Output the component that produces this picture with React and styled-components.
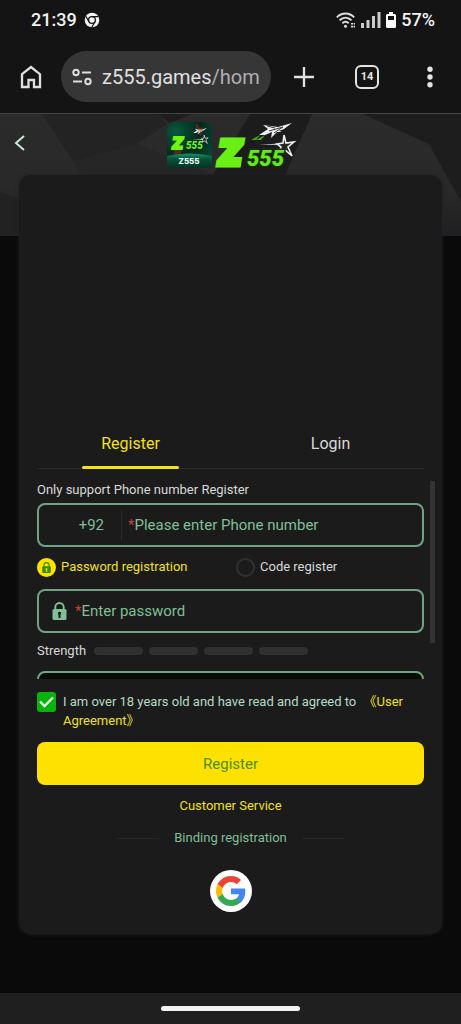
import React, { useState } from "react";
import styled, { createGlobalStyle } from "styled-components";

const GlobalStyle = createGlobalStyle`
  *, *::before, *::after { box-sizing: border-box; }
  body { margin: 0; background: #0a0a0b; }
  button, input { font: inherit; color: inherit; }
  svg { display: block; flex: none; overflow: visible; }
`;

const color = {
  chrome: "#141414",
  card: "#1b1b1b",
  mint: "#80bf98",
  yellow: "#f2e01c",
  button: "#ffe100",
  text: "#d9d9d9",
  faint: "#2b2b2b",
};

const Page = styled.div`
  min-height: 100vh;
  display: flex;
  flex-direction: column;
  background: #0a0a0b;
  color: ${color.text};
  font-family: Roboto, "Noto Sans CJK SC", sans-serif;
  font-size: 14px;
  line-height: 18px;
`;

const StatusBar = styled.header`
  height: 40px;
  padding: 0 26px 0 31px;
  display: flex;
  align-items: center;
  justify-content: space-between;
  background: ${color.chrome};
  color: #f2f2f2;
  font-size: 18px;
  font-weight: 500;
`;

const StatusGroup = styled.div`
  display: flex;
  align-items: center;
  gap: ${(p) => p.$gap}px;
`;

const BrowserBar = styled.nav`
  height: 74px;
  padding: 0 18px;
  display: flex;
  align-items: center;
  background: ${color.chrome};
  border-bottom: 1px solid #444;
`;

const IconButton = styled.button`
  display: grid;
  place-items: center;
  width: 26px;
  height: 26px;
  padding: 0;
  border: 0;
  background: none;
  cursor: pointer;
`;

const AddressPill = styled.div`
  flex: 1;
  min-width: 0;
  height: 51px;
  margin-left: 17px;
  padding: 0 8px 0 10px;
  display: flex;
  align-items: center;
  gap: 9px;
  border-radius: 26px;
  background: #363636;
`;

const AddressText = styled.span`
  flex: 1;
  min-width: 0;
  overflow: hidden;
  white-space: nowrap;
  font-size: 20px;
  line-height: 28px;
  color: #e0e0e0;
  span { color: #b0b0b0; }
`;

const BrowserActions = styled.div`
  display: flex;
  align-items: center;
  gap: 38px;
  margin-left: 20px;
`;

const TabCount = styled.button`
  width: 24px;
  height: 24px;
  padding: 0;
  border: 2px solid #e3e3e3;
  border-radius: 6px;
  background: none;
  color: #e3e3e3;
  font-size: 11px;
  line-height: 20px;
  font-weight: 700;
`;

const Main = styled.main`
  position: relative;
  flex: 1;
  padding: 0 19px 59px;
`;

const Backdrop = styled.svg`
  position: absolute;
  inset: 0 0 auto;
  width: 100%;
  height: 122px;
  overflow: hidden;
`;

const BrandRow = styled.div`
  position: relative;
  height: 61px;
  display: grid;
  grid-template-columns: 1fr auto 1fr;
  align-items: center;
`;

const Back = styled.button`
  justify-self: start;
  width: 24px;
  height: 28px;
  margin-left: -7px;
  padding: 0;
  border: 0;
  background: none;
`;

const Brand = styled.div`
  display: flex;
  align-items: center;
  gap: 4px;
`;

const Card = styled.section`
  position: relative;
  padding: 0 18px 22px;
  border-radius: 12px;
  background: ${color.card};
  box-shadow: 0 0 4px #20202a;
`;

const Banner = styled.div`
  height: 243px;
`;

const Tabs = styled.div`
  height: 51px;
  display: grid;
  grid-template-columns: 1fr 1fr;
  column-gap: 13px;
  border-bottom: 1px solid ${color.faint};
`;

const Tab = styled.button`
  display: flex;
  flex-direction: column;
  align-items: center;
  height: 51px;
  padding: 15px 0 0;
  border: 0;
  background: none;
  color: ${(p) => (p.$active ? color.yellow : color.text)};
  font-size: 16px;
  line-height: 22px;

  &::after {
    content: "";
    width: 97px;
    height: 3px;
    margin-top: auto;
    border-radius: 2px;
    background: ${(p) => (p.$active ? color.yellow : "transparent")};
  }
`;

const ScrollFrame = styled.div`
  position: relative;
  margin-top: 12px;
`;

const ScrollArea = styled.div`
  height: 198px;
  overflow-y: auto;
  scrollbar-width: none;
`;

const ScrollThumb = styled.div`
  position: absolute;
  top: 0;
  right: -11px;
  width: 5px;
  height: 162px;
  background: #333;
`;

const Hint = styled.p`
  margin: 0 0 4px;
  font-size: 13px;
`;

const Field = styled.label`
  display: flex;
  align-items: center;
  height: 44px;
  border: 2px solid #70a383;
  border-radius: 8px;
  background: ${(p) => (p.$dark ? "#060b08" : "transparent")};
  color: ${color.mint};
  font-size: 15px;
`;

const Prefix = styled.span`
  width: 83px;
  height: 30px;
  padding-right: 17px;
  margin-right: 6px;
  border-right: 1px solid ${color.faint};
  line-height: 30px;
  text-align: right;
`;

const FieldIcon = styled.span`
  margin: 0 8px 0 13px;
`;

const Star = styled.span`
  color: #c8403c;
`;

const TextInput = styled.input`
  flex: 1;
  min-width: 0;
  padding: 0;
  border: 0;
  outline: 0;
  background: none;
  &::placeholder { color: ${color.mint}; opacity: 1; }
`;

const Methods = styled.div`
  display: grid;
  grid-template-columns: 199px 1fr;
  margin: 10px 0 12px;
`;

const Method = styled.label`
  display: flex;
  align-items: center;
  gap: 5px;
  height: 20px;
  font-size: 13px;
  color: ${(p) => (p.$active ? color.yellow : color.text)};
`;

const RadioMark = styled.span`
  position: relative;
  display: grid;
  place-items: center;
  width: 19px;
  height: 19px;
  border-radius: 50%;
  border: 2px solid ${(p) => (p.$active ? color.button : "#303030")};
  background: ${(p) => (p.$active ? color.button : "transparent")};
`;

const HiddenInput = styled.input`
  position: absolute;
  inset: 0;
  width: 100%;
  height: 100%;
  margin: 0;
  opacity: 0;
`;

const Strength = styled.div`
  display: flex;
  align-items: center;
  gap: 6px;
  height: 18px;
  margin: 9px 0 11px;
  font-size: 13px;
`;

const StrengthBars = styled.span`
  display: flex;
  gap: 6px;
  padding-left: 2px;
`;

const StrengthBar = styled.span`
  width: 49px;
  height: 8px;
  border-radius: 4px;
  background: #303030;
`;

const Agreement = styled.div`
  display: flex;
  gap: 7px;
  margin-top: 13px;
  font-size: 13px;
  line-height: 19px;
  color: #b5dcc5;
`;

const CheckMark = styled.span`
  position: relative;
  flex: none;
  display: grid;
  place-items: center;
  width: 19px;
  height: 20px;
  border-radius: 3px;
  background: ${(p) => (p.$on ? "#08b30c" : "#333")};
`;

const TextLink = styled.a`
  color: ${color.yellow};
  text-decoration: none;
`;

const AgreementText = styled.div`
  ${TextLink} { margin-left: 4px; }
`;

const Submit = styled.button`
  display: block;
  width: 100%;
  height: 43px;
  margin-top: 12px;
  border: 0;
  border-radius: 8px;
  background: ${color.button};
  color: #4c8c10;
  font-size: 15px;
`;

const Footer = styled.div`
  display: flex;
  flex-direction: column;
  align-items: center;
  margin-top: 12px;
  font-size: 13px;
`;

const Divider = styled.div`
  display: flex;
  align-items: center;
  gap: 15px;
  margin: 14px 0 23px;
  color: ${color.mint};

  &::before, &::after {
    content: "";
    width: 43px;
    height: 1px;
    background: #262626;
  }
`;

const GoogleButton = styled.button`
  display: grid;
  place-items: center;
  width: 42px;
  height: 42px;
  padding: 0;
  border: 0;
  border-radius: 50%;
  background: #fff;
`;

const GestureBar = styled.footer`
  height: 31px;
  display: grid;
  place-items: center;
  background: #1f1f1f;

  &::after {
    content: "";
    width: 139px;
    height: 5px;
    border-radius: 3px;
    background: #f2f2f2;
  }
`;

const ChromeIcon = () => (
  <svg width="16" height="16" viewBox="0 0 16 16">
    <circle cx="8" cy="8" r="7.3" fill="#f2f2f2" />
    <circle cx="8" cy="8" r="3.4" fill="#f2f2f2" stroke="#141414" strokeWidth="1.3" />
    <path d="M8 4.6h6.5M5 9.8L1.8 4.3M11 9.8L7.8 15.2" stroke="#141414" strokeWidth="1.2" />
  </svg>
);

const WifiIcon = () => (
  <svg width="20" height="17" viewBox="0 0 20 17" fill="none" stroke="#ddd" strokeWidth="1.9">
    <path d="M.8 5.3C5.8.2 13.2.2 18.2 5.3M3.5 8.3c3.6-3.5 8.4-3.5 12 0M6.3 11.2c2-1.9 4.4-1.9 6.4 0" />
    <circle cx="9.5" cy="14.3" r="1.5" fill="#ddd" stroke="none" />
    <path d="M15 11.8h4M15 14.6h4" strokeWidth="1.6" strokeDasharray="2.3 .6" />
  </svg>
);

const SignalIcon = () => (
  <svg width="20" height="16" viewBox="0 0 20 16" fill="#ccc">
    <path d="M0 11h3v5H0zM5.5 8h3v8h-3zM11 4h3v12h-3zM16.5 0h3v16h-3z" />
  </svg>
);

const BatteryIcon = () => (
  <svg width="10" height="16" viewBox="0 0 10 16">
    <path d="M3 0h4v2h1.5Q10 2 10 3.5v11Q10 16 8.5 16h-7Q0 16 0 14.5v-11Q0 2 1.5 2H3z" fill="#fff" />
    <path d="M2 4h6v4H2z" fill="#141414" />
  </svg>
);

const HomeIcon = () => (
  <svg width="24" height="26" viewBox="0 0 24 26" fill="none" stroke="#e0e0e0" strokeWidth="2.3">
    <path d="M3 10.2 12 3l9 7.2V23h-6v-7H9.5v7H3z" />
  </svg>
);

const SiteIcon = () => (
  <svg width="22" height="20" viewBox="0 0 22 20" fill="none" stroke="#ddd" strokeWidth="2">
    <circle cx="5" cy="5.5" r="2.7" />
    <path d="M11 5.5h9M2 14.5h9" />
    <circle cx="17" cy="14.5" r="2.7" />
  </svg>
);

const PlusIcon = () => (
  <svg width="22" height="22" viewBox="0 0 22 22" stroke="#e3e3e3" strokeWidth="2.3">
    <path d="M11 1v20M1 11h20" />
  </svg>
);

const DotsIcon = () => (
  <svg width="8" height="22" viewBox="0 0 8 22" fill="#e3e3e3">
    <circle cx="4" cy="3.2" r="2.7" />
    <circle cx="4" cy="11" r="2.7" />
    <circle cx="4" cy="18.8" r="2.7" />
  </svg>
);

const LockIcon = ({ width, height, body, hole }) => (
  <svg width={width} height={height} viewBox="0 0 14 18">
    <path d="M2.8 8V5.2a4.2 4.2 0 0 1 8.4 0V8" fill="none" stroke={body} strokeWidth="1.9" />
    <rect y="7" width="14" height="11" rx="1.5" fill={body} />
    <path d="M7 9.7a1.7 1.7 0 0 1 1 3V16H6v-3.3a1.7 1.7 0 0 1 1-3z" fill={hole} />
  </svg>
);

const Jet = () => (
  <g fill="#eee">
    <path d="M5 12 14 6l-5-4 15 2L38 0l-8 6-5 2 3 1-5 0-6 6 1-6-7 3z" />
    <path d="m15 8 14-4-9 6M13 3l8 2" stroke="#3a3a3a" strokeWidth="1" fill="none" />
  </g>
);

const StarOutline = () => (
  <path d="M8 0l2 8 8-1-6 5 4 9-7-6-6 3 2-6-4-3 6-1z" fill="#242824" stroke="#eee" strokeWidth="1.6" />
);

const AppBadge = () => (
  <svg width="45" height="46" viewBox="0 0 45 46" role="img" aria-label="Z555 app">
    <defs>
      <radialGradient id="badge" cx=".2" cy=".2" r=".9">
        <stop offset="0" stopColor="#07583c" />
        <stop offset=".6" stopColor="#06271d" />
        <stop offset="1" stopColor="#05442e" />
      </radialGradient>
      <linearGradient id="badgeBase" x2="0" y2="1">
        <stop offset="0" stopColor="#159a69" />
        <stop offset=".35" stopColor="#07543b" />
        <stop offset="1" stopColor="#033425" />
      </linearGradient>
    </defs>
    <rect width="45" height="46" rx="7" fill="url(#badge)" />
    <path d="M29 1l4 5 3-1-2 9-5-4zM7 27l8-1-1 6-7 1z" fill="#5b2a16" />
    <path d="M0 34Q22 29 45 34v5q0 7-7 7H7q-7 0-7-7z" fill="url(#badgeBase)" />
    <text x="5" y="27" fontFamily="Inter" fontSize="16" fontWeight="900" fontStyle="italic" fill="#70f411" stroke="#70f411" strokeWidth="2">Z</text>
    <text x="19" y="27" fontFamily="Roboto" fontSize="10" fontWeight="900" fontStyle="italic" fill="#70f411">555</text>
    <g transform="translate(24 6) scale(.42)"><Jet /></g>
    <path d="M25 18l11-1v1z" fill="#ccc" />
    <g transform="translate(34 13) scale(.4)"><StarOutline /></g>
    <text x="22" y="42" textAnchor="middle" fontFamily="Inter" fontSize="8" fontWeight="800" fill="#eafff3">Z555</text>
  </svg>
);

const WordLogo = () => (
  <svg width="79" height="46" viewBox="0 0 79 46" role="img" aria-label="Z555">
    <path d="m35 18 9-5-4 5zM40 18l9-5-4 5z" fill="#49a91c" />
    <g transform="translate(38 1)"><Jet /></g>
    <path d="M43 23l25-2v2z" fill="#bbb" />
    <g transform="translate(60 13)"><StarOutline /></g>
    <text x="2" y="43" fontFamily="Inter" fontSize="34" fontWeight="900" fontStyle="italic" fill="#69ef13" stroke="#69ef13" strokeWidth="5">Z</text>
    <text x="31" y="44" fontFamily="Roboto" fontSize="22" fontWeight="900" fontStyle="italic" fill="#62ec12" stroke="#1c2a16" strokeWidth="3" paintOrder="stroke">555</text>
  </svg>
);

const GoogleLogo = () => (
  <svg width="30" height="30" viewBox="0 0 48 48">
    <path fill="#EA4335" d="M24 9.5c3.54 0 6.71 1.22 9.21 3.6l6.85-6.85C35.9 2.38 30.47 0 24 0 14.62 0 6.51 5.38 2.56 13.22l7.98 6.19C12.43 13.72 17.74 9.5 24 9.5z" />
    <path fill="#4285F4" d="M46.98 24.55c0-1.57-.15-3.09-.38-4.55H24v9.02h12.94c-.58 2.96-2.26 5.48-4.78 7.18l7.73 6c4.51-4.18 7.09-10.36 7.09-17.65z" />
    <path fill="#FBBC05" d="M10.53 28.59c-.48-1.45-.76-2.99-.76-4.59s.27-3.14.76-4.59l-7.98-6.19C.92 16.46 0 20.12 0 24c0 3.88.92 7.54 2.56 10.78l7.97-6.19z" />
    <path fill="#34A853" d="M24 48c6.48 0 11.93-2.13 15.89-5.81l-7.73-6c-2.15 1.45-4.92 2.3-8.16 2.3-6.26 0-11.57-4.22-13.47-9.91l-7.98 6.19C6.51 42.62 14.62 48 24 48z" />
  </svg>
);

export default function App() {
  const [tab, setTab] = useState("Register");
  const [method, setMethod] = useState("Password registration");
  const [agreed, setAgreed] = useState(true);

  return (
    <Page>
      <GlobalStyle />
      <StatusBar>
        <StatusGroup $gap={7}>
          <span>21:39</span>
          <ChromeIcon />
        </StatusGroup>
        <StatusGroup $gap={5}>
          <WifiIcon />
          <SignalIcon />
          <BatteryIcon />
          <span>57%</span>
        </StatusGroup>
      </StatusBar>
      <BrowserBar>
        <IconButton aria-label="Home"><HomeIcon /></IconButton>
        <AddressPill>
          <SiteIcon />
          <AddressText>z555.games<span>/hom</span></AddressText>
        </AddressPill>
        <BrowserActions>
          <IconButton aria-label="New tab"><PlusIcon /></IconButton>
          <TabCount aria-label="14 open tabs">14</TabCount>
          <IconButton aria-label="Menu"><DotsIcon /></IconButton>
        </BrowserActions>
      </BrowserBar>

      <Main>
        <Backdrop viewBox="0 0 461 122" preserveAspectRatio="none">
          <defs>
            <linearGradient id="shade" x2="0" y2="1">
              <stop offset="0" stopColor="#2b2b2b" />
              <stop offset=".6" stopColor="#292929" />
              <stop offset="1" stopColor="#202022" />
            </linearGradient>
          </defs>
          <path fill="url(#shade)" d="M0 0h461v122H0z" />
          <path fill="#232323" d="M42 0h115l10 10-30 20-64 17z" />
          <path fill="#262626" d="M73 47l64-17 75 31H82z" />
          <path fill="#1e1e1e" d="M157 0h35l-22 9z" />
          <path fill="#1c1c1c" d="M250 0h62l-27 61h-72z" />
          <path fill="#1d1d1d" d="M363 0h98v88l-32-58z" />
          <path fill="#222" d="M0 78l20 7v37H0z" />
        </Backdrop>
        <BrandRow>
          <Back aria-label="Back">
            <svg width="24" height="28" viewBox="0 0 24 28" fill="none" stroke="#c5ecd4" strokeWidth="2">
              <path d="m12 5-8 7 8 7" />
            </svg>
          </Back>
          <Brand>
            <AppBadge />
            <WordLogo />
          </Brand>
        </BrandRow>

        <Card>
          <Banner />
          <Tabs role="tablist">
            {["Register", "Login"].map((name) => (
              <Tab key={name} role="tab" aria-selected={tab === name} $active={tab === name} onClick={() => setTab(name)}>
                {name}
              </Tab>
            ))}
          </Tabs>

          <ScrollFrame>
            <ScrollArea>
              <Hint>Only support Phone number Register</Hint>
              <Field>
                <Prefix>+92</Prefix>
                <Star>*</Star>
                <TextInput type="tel" aria-label="Phone number" placeholder="Please enter Phone number" />
              </Field>
              <Methods>
                {["Password registration", "Code register"].map((name) => (
                  <Method key={name} $active={method === name}>
                    <RadioMark $active={method === name}>
                      {method === name && <LockIcon width={9} height={11} body="#389000" hole="#ffe100" />}
                      <HiddenInput type="radio" name="method" checked={method === name} onChange={() => setMethod(name)} />
                    </RadioMark>
                    {name}
                  </Method>
                ))}
              </Methods>
              <Field>
                <FieldIcon><LockIcon width={15} height={18} body={color.mint} hole={color.card} /></FieldIcon>
                <Star>*</Star>
                <TextInput type="password" aria-label="Password" placeholder="Enter password" />
              </Field>
              <Strength>
                Strength
                <StrengthBars>
                  <StrengthBar />
                  <StrengthBar />
                  <StrengthBar />
                  <StrengthBar />
                </StrengthBars>
              </Strength>
              <Field $dark>
                <TextInput type="password" aria-label="Confirm password" />
              </Field>
            </ScrollArea>
            <ScrollThumb />
          </ScrollFrame>

          <Agreement>
            <CheckMark $on={agreed}>
              {agreed && (
                <svg width="15" height="12" viewBox="0 0 15 12" fill="none" stroke="#e9ffe9" strokeWidth="2.4">
                  <path d="m1 5.5 4.5 4.5L14 1.5" />
                </svg>
              )}
              <HiddenInput id="agree" type="checkbox" checked={agreed} onChange={() => setAgreed(!agreed)} />
            </CheckMark>
            <AgreementText>
              <label htmlFor="agree">I am over 18 years old and have read and agreed to </label>
              <TextLink href="#agreement">《User Agreement》</TextLink>
            </AgreementText>
          </Agreement>
          <Submit type="submit">Register</Submit>

          <Footer>
            <TextLink href="#service">Customer Service</TextLink>
            <Divider>Binding registration</Divider>
            <GoogleButton aria-label="Continue with Google"><GoogleLogo /></GoogleButton>
          </Footer>
        </Card>
      </Main>
      <GestureBar />
    </Page>
  );
}
